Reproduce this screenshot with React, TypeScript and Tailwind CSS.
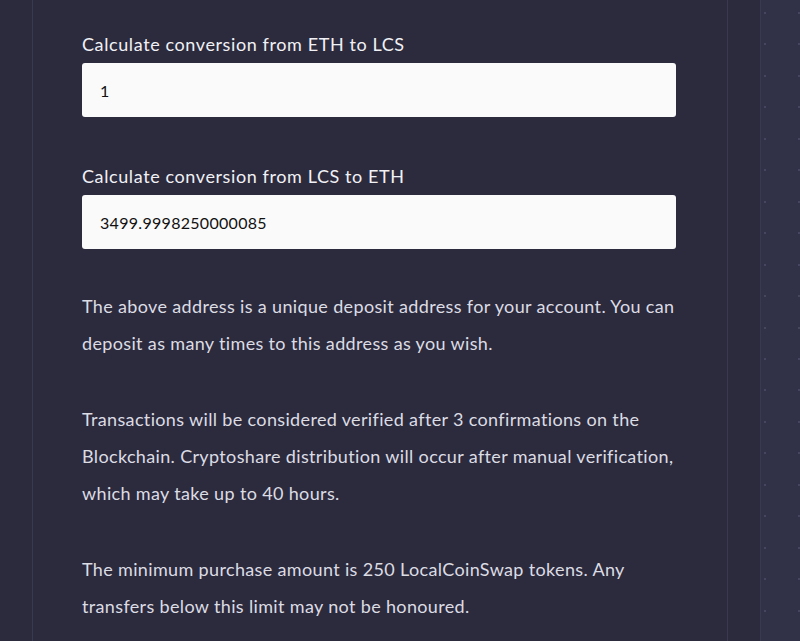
import React from "react";

const paragraphs = [
  "The above address is a unique deposit address for your account. You can deposit as many times to this address as you wish.",
  "Transactions will be considered verified after 3 confirmations on the Blockchain. Cryptoshare distribution will occur after manual verification, which may take up to 40 hours.",
  "The minimum purchase amount is 250 LocalCoinSwap tokens. Any transfers below this limit may not be honoured.",
];

function Field({ label, value }: { label: string; value: string }) {
  return (
    <div className="flex flex-col gap-[8px]">
      <label className="text-[18px] leading-[22px] tracking-[0.6px] text-[#f1f1f5]">{label}</label>
      <input
        readOnly
        value={value}
        className="h-[54px] w-full rounded-[3px] bg-[#fafafa] px-[18px] text-[16px] tracking-[0.3px] text-[#111] outline-none"
      />
    </div>
  );
}

export default function App() {
  const dots = Array.from({ length: 20 });

  return (
    <div
      className="flex h-[641px] w-[800px] overflow-hidden bg-[#2c2b3d]"
      style={{ fontFamily: "Lato, 'Open Sans', sans-serif" }}
    >
      {/* left gutter */}
      <div className="w-[33px] shrink-0 border-r border-[#393950]" />

      {/* main content */}
      <div className="w-[694px] shrink-0 px-[49px] pt-[33px]">
        <div className="flex w-[594px] flex-col">
          <Field label="Calculate conversion from ETH to LCS" value="1" />
          <div className="h-[48px]" />
          <Field label="Calculate conversion from LCS to ETH" value="3499.9998250000085" />

          <div className="mt-[39px] flex flex-col gap-[39px]">
            {paragraphs.map((p, i) => (
              <p key={i} className="text-[18px] leading-[37px] tracking-[0.35px] text-[#dcdce4]">
                {p}
              </p>
            ))}
          </div>
        </div>
      </div>

      {/* narrow strip */}
      <div className="w-[34px] shrink-0 border-x border-[#393950]" />

      {/* right dotted area */}
      <div className="flex flex-1 flex-col bg-[#313148] pt-[12px]">
        {dots.map((_, i) => (
          <div key={i} className="flex h-[33.33px] justify-between pl-[3px] pr-0">
            <span className="h-[2px] w-[2px] rounded-full bg-[#4e4e68]" />
            <span className="h-[2px] w-[2px] rounded-full bg-[#4e4e68]" />
          </div>
        ))}
      </div>
    </div>
  );
}
